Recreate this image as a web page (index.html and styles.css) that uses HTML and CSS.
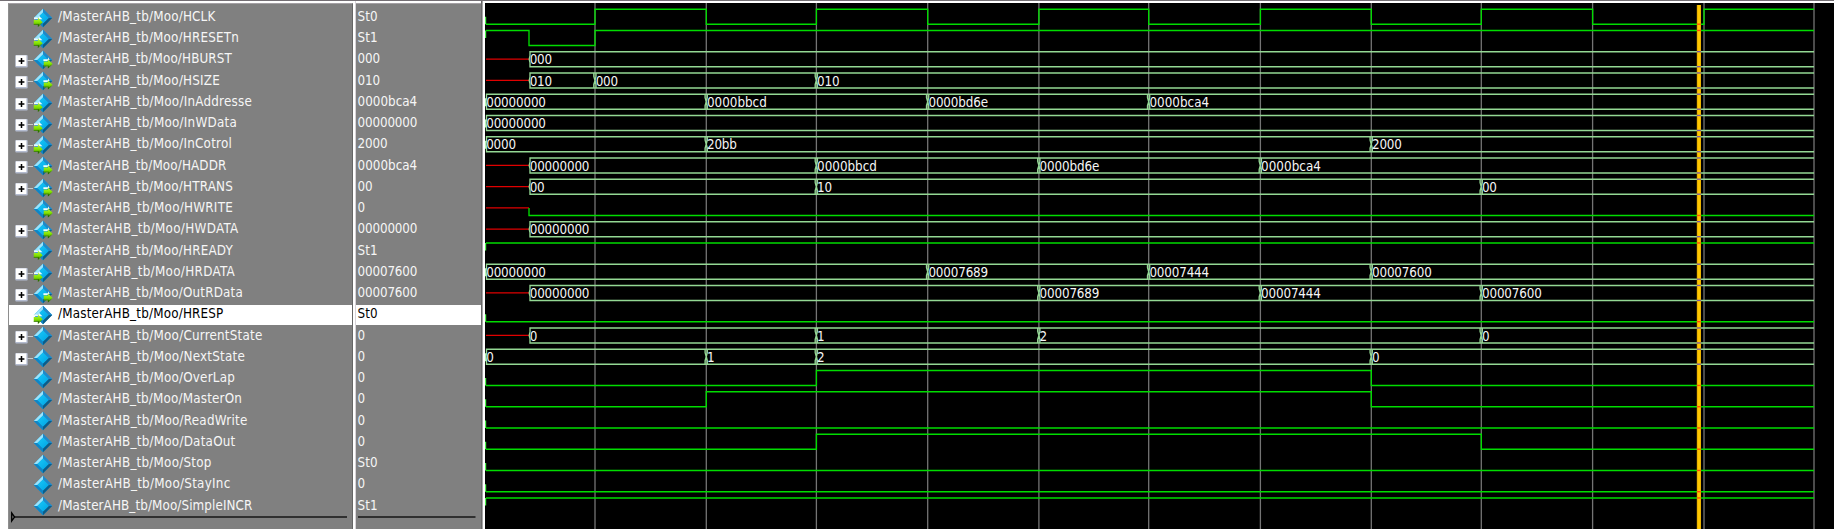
FILE: index.html
```
<!DOCTYPE html>
<html lang="en">
<head>
<meta charset="utf-8">
<title>Wave</title>
<link rel="stylesheet" href="styles.css">
</head>
<body>
<svg class="defs" width="0" height="0" aria-hidden="true">
  <defs>
    <linearGradient id="face" x1="0" y1="0" x2="1" y2="1"><stop offset="0" stop-color="#18c8f8"/><stop offset="1" stop-color="#00a4e4"/></linearGradient>
    <linearGradient id="lime" x1="0" y1="0" x2="0" y2="1"><stop offset="0" stop-color="#b4f43c"/><stop offset="0.5" stop-color="#84e400"/><stop offset="1" stop-color="#2c7400"/></linearGradient>
    <symbol id="gem" viewBox="0 0 20 20">
      <path d="M10 .8 19.2 10 10 19.2 .8 10Z" fill="#1c9cd8"/>
      <path d="M10 .8 .8 10H4.4L10 4.4Z" fill="#9ce4fc"/>
      <path d="M10 .8 19.2 10H15.6L10 4.4Z" fill="#2088c8"/>
      <path d="M19.2 10 10 19.2V15.6L15.6 10Z" fill="#0c5c88"/>
      <path d="M.8 10 10 19.2V15.6L4.4 10Z" fill="#1084c4"/>
      <path d="M10 4.4 15.6 10 10 15.6 4.4 10Z" fill="url(#face)"/>
    </symbol>
    <symbol id="arrow" viewBox="0 0 10 10">
      <path d="M.5 2.6H4.8V.2L9.7 5 4.8 9.8V7.6H.5Z" fill="url(#lime)"/>
      <path d="M.5 7.2H4.8V9.6L9.6 5 5.7 8.2V6.8H.5Z" fill="#286800"/>
    </symbol>
  </defs>
</svg>
<main class="viewer">
  <section class="pane names" id="names"></section>
  <div class="sash"></div>
  <section class="pane values" id="values"></section>
  <div class="sash sash-right"></div>
  <section class="waves"><svg id="plot" width="1349" height="526" viewBox="485 3 1349 526"></svg></section>
</main>
<script src="wave.js"></script>
</body>
</html>
```
FILE: styles.css
```
html { overflow: hidden; }
body {
  margin: 0;
  background: #fff;
  font-family: "DejaVu Sans Condensed", "DejaVu Sans", "Noto Sans", sans-serif;
  font-stretch: condensed;
  font-size: 13.3px;
  color: #f6f6f6;
}
.defs { display: block; }
.viewer {
  box-sizing: border-box;
  display: flex;
  width: 1834px;
  height: 529px;
  padding-left: 8px;
  border-top: 1px solid #746f74;
  overflow: hidden;
}
.pane {
  box-sizing: border-box;
  flex: none;
  margin-top: 2px;
  border-top: 1px solid #a4a0a4;
  padding-top: 3px;
  background: #808080;
  overflow: hidden;
}
.names { width: 345px; border-left: 1px solid #8e8e8e; border-right: 1px solid #666; }
.values { width: 125px; }
.sash { flex: none; width: 3px; background: linear-gradient(90deg, #fff 2px, #d8d4d8 2px); }
.sash-right { width: 4px; background: linear-gradient(90deg, #686868 1px, #a8a8a8 1px 2px, #fff 2px); }
.waves { flex: none; width: 1349px; height: 526px; margin-top: 2px; background: #000; }
.waves svg { display: block; }
.row { display: flex; align-items: center; height: 21.25px; white-space: nowrap; }
.cell { display: flex; align-items: center; width: 100%; height: 20px; }
.selected .cell { background: #fff; color: #000; }
.expander { flex: none; width: 24px; height: 20px; }
.icon { flex: none; width: 20px; height: 20px; margin: 0 6px 0 -.5px; }
.label { display: block; line-height: 18px; margin-top: -1.5px; }
.names .label { margin-left: -.5px; }
.values .label { margin-left: 1.5px; }
.insertion { display: block; margin-top: -6px; }
.plot-text { font-size: 13.3px; fill: #f6f6f6; }
.grid { stroke: #747474; stroke-width: 1.3; }
.logic { fill: none; stroke: #00dc00; stroke-width: 1.35; }
.start { stroke: #50f850; stroke-width: 2; }
.bus { fill: none; stroke: #94d894; stroke-width: 1.35; }
.bus-start { stroke: #b8f8b8; stroke-width: 1.6; }
.unknown { stroke: #e00000; stroke-width: 1.3; }
.cursor { fill: #ffc800; }
.cursor-edge { fill: #d8a000; }
```
FILE: wave.js
```
const PITCH = 21.25, START = 485.5, END = 1814, LOAD = 529;
const T = [595, 706.3, 816.4, 927.7, 1038.9, 1148.7, 1260.4, 1371.3, 1481.3, 1592.6, 1704];

// name, right edge of the label, value, port direction, expandable, waveform
// waveform: {l: first level, e: toggle times} or {b: [[time, text], ...]}, u marks an unknown lead-in
const signals = [
  ["HCLK", 215.5, "St0", "in", 0, {l: 0, e: T}],
  ["HRESETn", 239, "St1", "in", 0, {l: 1, e: [LOAD, T[0]]}],
  ["HBURST", 232, "000", "out", 1, {b: [[LOAD, "000"]]}],
  ["HSIZE", 220, "010", "out", 1, {b: [[LOAD, "010"], [T[0], "000"], [T[2], "010"]]}],
  ["InAddresse", 252, "0000bca4", "in", 1, {b: [[START, "00000000"], [T[1], "0000bbcd"], [T[3], "0000bd6e"], [T[5], "0000bca4"]]}],
  ["InWData", 237, "00000000", "in", 1, {b: [[START, "00000000"]]}],
  ["InCotrol", 232, "2000", "in", 1, {b: [[START, "0000"], [T[1], "20bb"], [T[7], "2000"]]}],
  ["HADDR", 226.5, "0000bca4", "out", 1, {b: [[LOAD, "00000000"], [T[2], "0000bbcd"], [T[4], "0000bd6e"], [T[6], "0000bca4"]]}],
  ["HTRANS", 233, "00", "out", 1, {b: [[LOAD, "00"], [T[2], "10"], [T[8], "00"]]}],
  ["HWRITE", 233, "0", "out", 0, {l: 0, e: [], u: 1}],
  ["HWDATA", 238.5, "00000000", "out", 1, {b: [[LOAD, "00000000"]]}],
  ["HREADY", 233, "St1", "in", 0, {l: 1, e: []}],
  ["HRDATA", 235, "00007600", "in", 1, {b: [[START, "00000000"], [T[3], "00007689"], [T[5], "00007444"], [T[7], "00007600"]]}],
  ["OutRData", 243, "00007600", "out", 1, {b: [[LOAD, "00000000"], [T[4], "00007689"], [T[6], "00007444"], [T[8], "00007600"]]}],
  ["HRESP", 223.5, "St0", "in", 0, {l: 0, e: []}],
  ["CurrentState", 262.5, "0", "", 1, {b: [[LOAD, "0"], [T[2], "1"], [T[4], "2"], [T[8], "0"]]}],
  ["NextState", 245, "0", "", 1, {b: [[START, "0"], [T[1], "1"], [T[2], "2"], [T[7], "0"]]}],
  ["OverLap", 235, "0", "", 0, {l: 0, e: [T[2], T[7]]}],
  ["MasterOn", 242, "0", "", 0, {l: 0, e: [T[1], T[7]]}],
  ["ReadWrite", 247.5, "0", "", 0, {l: 0, e: []}],
  ["DataOut", 235.5, "0", "", 0, {l: 0, e: [T[2], T[8]]}],
  ["Stop", 211.5, "St0", "", 0, {l: 0, e: []}],
  ["StayInc", 230.5, "0", "", 0, {l: 0, e: []}],
  ["SimpleINCR", 252.5, "St1", "", 0, {l: 1, e: []}],
];

const expander = open => `<svg class="expander" viewBox="0 0 24 20">${open ? `
  <path d="M18 10.5H24" stroke="#c8c8c8"/><rect x="6.3" y="5" width="12.4" height="12.4" rx="1" fill="#b4bcd0"/>
  <rect x="6.8" y="5.4" width="10.6" height="10.6" fill="#fff"/><path d="M9.6 11H15.4M12.5 8.1V13.9" stroke="#000" stroke-width="1.5"/>` : ""}</svg>`;

const icon = dir => `<svg class="icon" viewBox="0 0 20 20"><use href="#gem" width="20" height="20"/>${
  dir === "in" ? '<path d="M1 11.2V9.4H5.6V7.4L9.4 11.2Z" fill="#f0fcff"/><use href="#arrow" x=".2" y="9.4" width="9.8" height="9.8"/>' :
  dir === "out" ? '<path d="M10.4 11V9.2H15V7.2L16.6 9.8 14 11Z" fill="#f0fcff"/><use href="#arrow" x="10.2" y="9" width="9.8" height="9.8"/>' : ""}</svg>`;

let names = "", values = "", plot = "", cursor = "";
for (const x of [...T, END]) plot += `<path class="grid" d="M${x} 3V529"/>`;

signals.forEach(([name, edge, value, dir, open, w], i) => {
  const sel = name === "HRESP" ? " selected" : "";
  names += `<div class="row${sel}"><div class="cell">${expander(open)}${icon(dir)}<span class="label" data-width="${edge - 58}">/MasterAHB_tb/Moo/${name}</span></div></div>`;
  const vw = /^St/.test(value) ? 20.4 : value.length * 7.47;
  values += `<div class="row${sel}"><div class="cell"><span class="label" data-width="${vw}">${value}</span></div></div>`;

  const hi = 9.2 + i * PITCH, lo = hi + 15, mid = hi + 7.5;
  if (w.b) {
    const first = w.b[0][0];
    if (first === LOAD) plot += `<path class="unknown" d="M486 ${mid}H${LOAD}"/>`;
    const x0 = first + 1;
    plot += `<path class="bus" d="M${END} ${hi}H${x0}V${hi + 4}L${x0 - .8} ${mid}L${x0} ${lo - 4}V${lo}H${END}"/>`;
    if (first === START) plot += `<path class="bus-start" d="M485.5 ${hi + 4}V${lo - 3}"/>`;
    w.b.forEach(([x, text], k) => {
      if (k) plot += `<path class="bus" d="M${x - 1.2} ${hi}V${hi + 3.5}L${x} ${mid}L${x - 1.2} ${lo - 3.5}V${lo}M${x + 1} ${hi}V${hi + 3.5}L${x} ${mid}L${x + 1} ${lo - 3.5}V${lo}"/>`;
      plot += `<text class="plot-text" x="${x + .7}" y="${hi + 12.7}" textLength="${text.length * 7.47}">${text}</text>`;
    });
    for (const y of [hi, lo]) cursor += `<path d="M1697 ${y}H1700.8" stroke="#7858a0" stroke-width="1.35"/>`;
  } else {
    let level = w.l, x = w.u ? LOAD : 486;
    if (w.u) plot += `<path class="unknown" d="M486 ${mid}H${LOAD}"/>`;
    else plot += `<path class="start" d="M485.2 ${mid}V${level ? hi : lo}"/>`;
    let d = `M${x} ${w.u ? mid : level ? hi : lo}V${level ? hi : lo}`;
    for (const t of w.e) {
      level = 1 - level;
      d += `H${t}V${level ? hi : lo}`;
    }
    plot += `<path class="logic" d="${d}H${END}"/>`;
    const at = w.e.filter(t => t < 1699).length % 2 ? 1 - w.l : w.l;
    cursor += `<path d="M1697 ${at ? hi : lo}H1700.8" stroke="#ff5000" stroke-width="1.35"/>`;
  }
});

names += `<svg class="insertion" width="343" height="12"><path d="M5 6H338" stroke="#303030" stroke-width="1.8"/><path d="M2.7 2 5.6 6 2.7 10Z" fill="#808080" stroke="#000" stroke-width="1.3"/></svg>`;
values += `<svg class="insertion" width="125" height="12"><path d="M2 6H119.5" stroke="#303030" stroke-width="1.8"/></svg>`;
plot += `<path class="cursor-edge" d="M1696.8 5H1701V529H1696.8Z"/><path class="cursor" d="M1697.5 5H1700.5V529H1697.5Z"/>${cursor}`;

document.getElementById("names").innerHTML = names;
document.getElementById("values").innerHTML = values;
document.getElementById("plot").innerHTML = plot;

for (const el of document.querySelectorAll(".label")) {
  const gap = (el.dataset.width - el.getBoundingClientRect().width) / el.textContent.length;
  el.style.letterSpacing = gap.toFixed(3) + "px";
}
```
